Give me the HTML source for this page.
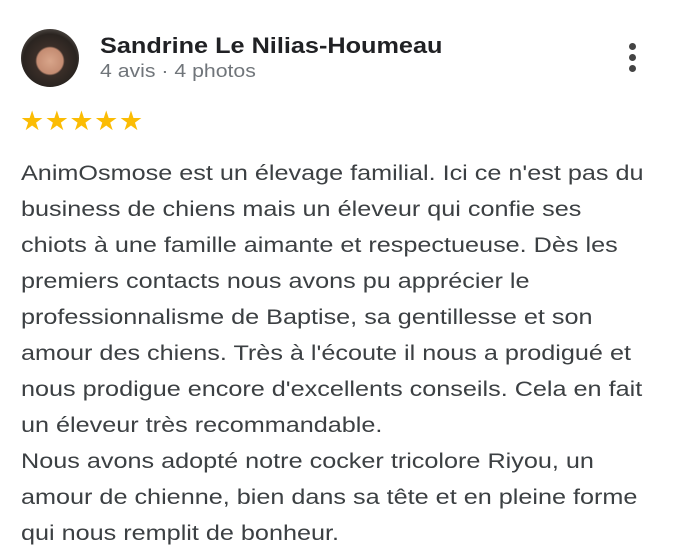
<!DOCTYPE html>
<html><head><meta charset="utf-8"><style>
body{margin:0;width:674px;height:558px;background:#fff;font-family:"Liberation Sans",Arial,sans-serif;position:relative;overflow:hidden}
.av{position:absolute;left:21px;top:29px;width:58px;height:58px;border-radius:50%;background:radial-gradient(circle at 50% 55%,#d8a58a 0,#c48c72 30%,#3a2e28 34%,#2a2420 62%,#8a8680 100%)}
.name{position:absolute;left:100px;top:33px;font-size:22px;font-weight:bold;color:#202124;white-space:nowrap;transform:scaleX(1.148);transform-origin:0 0}
.sub{position:absolute;left:100px;top:61px;font-size:18px;color:#70757a;white-space:nowrap;transform:scaleX(1.18);transform-origin:0 0}
.stars{position:absolute;left:20px;top:108px;font-size:27px;color:#fbbc04;letter-spacing:0.5px;line-height:27px}
.dots{position:absolute;left:629px;top:43px}
.dots i{display:block;width:7px;height:7px;border-radius:50%;background:#444;margin-bottom:4px}
.txt{position:absolute;left:21px;top:156px;font-size:21px;line-height:36px;color:#3c4043;white-space:nowrap;transform:scaleX(1.2);transform-origin:0 0}
</style></head><body>
<div class="av"></div>
<div class="name">Sandrine Le Nilias-Houmeau</div>
<div class="sub">4 avis · 4 photos</div>
<div class="dots"><i></i><i></i><i></i></div>
<div class="stars">★★★★★</div>
<div class="txt">AnimOsmose est un élevage familial. Ici ce n'est pas du<br>business de chiens mais un éleveur qui confie ses<br>chiots à une famille aimante et respectueuse. Dès les<br>premiers contacts nous avons pu apprécier le<br>professionnalisme de Baptise, sa gentillesse et son<br>amour des chiens. Très à l'écoute il nous a prodigué et<br>nous prodigue encore d'excellents conseils. Cela en fait<br>un éleveur très recommandable.<br>Nous avons adopté notre cocker tricolore Riyou, un<br>amour de chienne, bien dans sa tête et en pleine forme<br>qui nous remplit de bonheur.</div>
</body></html>
